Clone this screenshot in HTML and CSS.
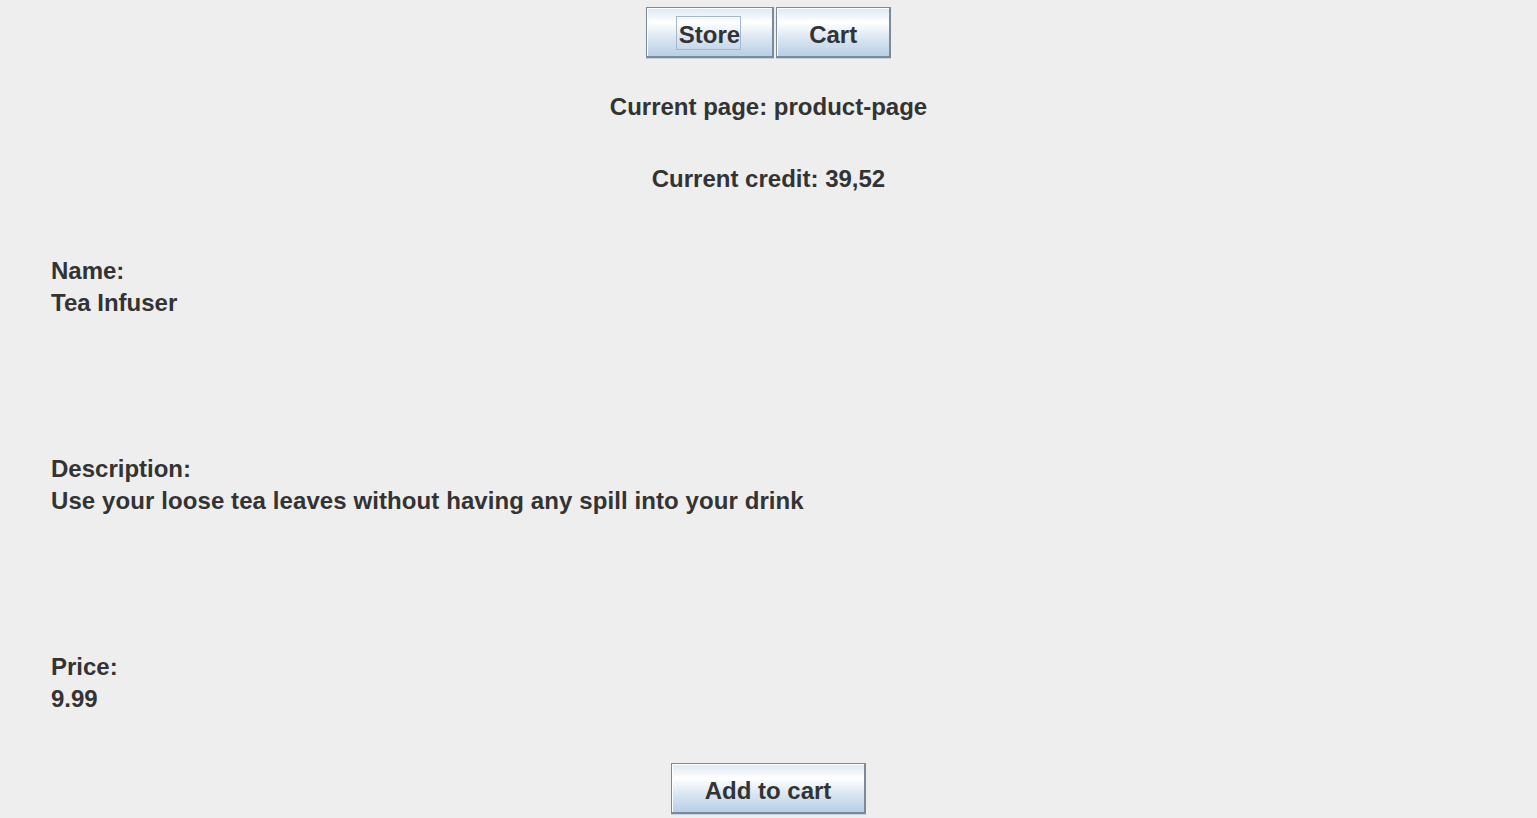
FILE: index.html
```html
<!DOCTYPE html>
<html>
<head>
<meta charset="utf-8">
<title>Store</title>
<link rel="stylesheet" href="styles.css">
</head>
<body>
<div class="app">
  <div class="nav">
    <button class="btn"><span class="focus">Store</span></button>
    <button class="btn">Cart</button>
  </div>
  <div class="status page">Current page: product-page</div>
  <div class="status credit">Current credit: 39,52</div>
  <div class="field name">
    <div class="line">Name:</div>
    <div class="line">Tea Infuser</div>
  </div>
  <div class="field desc">
    <div class="line">Description:</div>
    <div class="line wide">Use your loose tea leaves without having any spill into your drink</div>
  </div>
  <div class="field price">
    <div class="line">Price:</div>
    <div class="line">9.99</div>
  </div>
  <div class="actions">
    <button class="btn wide-btn">Add to cart</button>
  </div>
</div>
</body>
</html>
```

FILE: styles.css
```css
html, body {
  margin: 0;
  padding: 0;
  background: #eeeeee;
}
body {
  font-family: "Liberation Sans", Arial, sans-serif;
  font-weight: bold;
  font-size: 24px;
  color: #333333;
  height: 818px;
  overflow: hidden;
}
.app {
  padding-top: 7px;
}
.nav {
  display: flex;
  justify-content: center;
  gap: 2px;
}
.btn {
  box-sizing: border-box;
  height: 51px;
  margin: 0;
  padding: 11px 32px 5px 32px;
  font: inherit;
  color: #333333;
  line-height: 32px;
  border-style: solid;
  border-color: #7a8a99;
  border-width: 1px 2px 2px 1px;
  border-radius: 0;
  background: linear-gradient(to bottom, #dde8f3 0%, #ffffff 30%, #dde8f3 60%, #b8cfe5 100%);
  box-shadow: inset 1px 1px 0 #ffffff, 0 1px 0 #c3d2e0;
  white-space: nowrap;
  cursor: default;
}
.wide-btn {
  padding-left: 33px;
  padding-right: 33px;
}
.focus {
  position: relative;
}
.focus::after {
  content: "";
  position: absolute;
  left: -3px;
  right: -1px;
  top: -5px;
  bottom: -2px;
  border: 1px solid #a3b8cc;
}
.status {
  text-align: center;
  line-height: 32px;
}
.page {
  margin-top: 33px;
}
.credit {
  margin-top: 40px;
}
.field {
  padding-left: 51px;
  line-height: 32px;
}
.wide {
  letter-spacing: 0.09px;
}
.name {
  margin-top: 60px;
}
.desc {
  margin-top: 134px;
}
.price {
  margin-top: 134px;
}
.actions {
  display: flex;
  justify-content: center;
  margin-top: 48px;
}
```
